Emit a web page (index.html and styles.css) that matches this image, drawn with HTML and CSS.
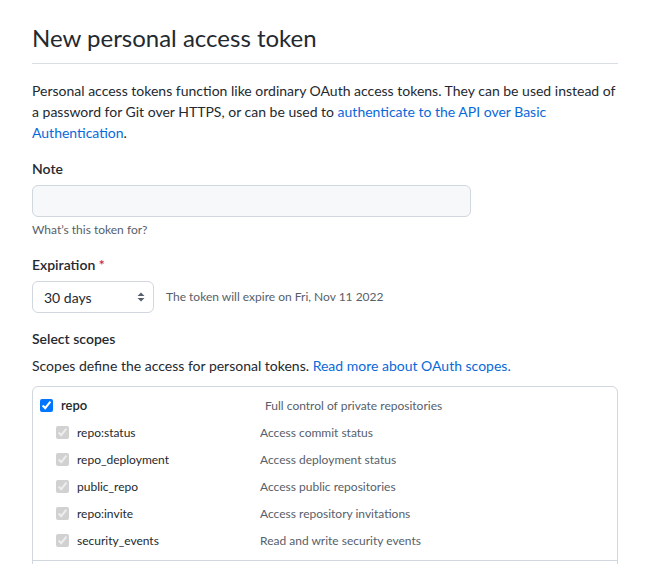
FILE: index.html
```html
<!DOCTYPE html>
<html lang="en">
<head>
  <meta charset="UTF-8" />
  <meta name="viewport" content="width=device-width, initial-scale=1.0"/>
  <title>New personal access token</title>
  <link rel="stylesheet" href="styles.css">
</head>
<body>
  <div class="page">
    <div class="subhead">
      <h2 class="subhead-heading">New personal access token</h2>
    </div>

    <p class="intro">
      Personal access tokens function like ordinary OAuth access tokens. They can be used instead of
      a password for Git over HTTPS, or can be used to <a href="#">authenticate to the API over Basic</a><br><a href="#">Authentication</a>.
    </p>

    <div class="form-group">
      <label class="form-label" for="note">Note</label>
      <input class="form-control note-input" type="text" id="note">
      <p class="note">What’s this token for?</p>
    </div>

    <div class="form-group">
      <label class="form-label" for="expiry">Expiration <span class="required">*</span></label>
      <div class="expiry-row">
        <div class="select-wrap">
          <select class="form-select" id="expiry">
            <option>30 days</option>
            <option>7 days</option>
            <option>60 days</option>
            <option>90 days</option>
          </select>
          <svg class="select-arrows" width="8" height="12" viewBox="0 0 8 12">
            <path d="M4 1.5 L7.5 5 H0.5 Z M4 10.5 L0.5 7 H7.5 Z" fill="#57606a"/>
          </svg>
        </div>
        <span class="expiry-note">The token will expire on Fri, Nov 11 2022</span>
      </div>
    </div>

    <div class="form-group">
      <div class="form-label">Select scopes</div>
      <p class="scopes-desc">Scopes define the access for personal tokens. <a href="#">Read more about OAuth scopes.</a></p>

      <div class="scopes">
        <div class="scope-group">
          <div class="scope-row parent">
            <label class="scope-name"><input type="checkbox" checked> repo</label>
            <span class="scope-desc">Full control of private repositories</span>
          </div>
          <div class="scope-row child">
            <label class="scope-name"><input type="checkbox" checked disabled> repo:status</label>
            <span class="scope-desc">Access commit status</span>
          </div>
          <div class="scope-row child">
            <label class="scope-name"><input type="checkbox" checked disabled> repo_deployment</label>
            <span class="scope-desc">Access deployment status</span>
          </div>
          <div class="scope-row child">
            <label class="scope-name"><input type="checkbox" checked disabled> public_repo</label>
            <span class="scope-desc">Access public repositories</span>
          </div>
          <div class="scope-row child">
            <label class="scope-name"><input type="checkbox" checked disabled> repo:invite</label>
            <span class="scope-desc">Access repository invitations</span>
          </div>
          <div class="scope-row child">
            <label class="scope-name"><input type="checkbox" checked disabled> security_events</label>
            <span class="scope-desc">Read and write security events</span>
          </div>
        </div>
        <div class="scope-group empty"></div>
      </div>
    </div>
  </div>
</body>
</html>
```

FILE: styles.css
```css
body {
  margin: 0;
  font-family: Lato, "Noto Sans", sans-serif;
  font-size: 14px;
  line-height: 1.5;
  color: #24292f;
  background: #fff;
}
a {
  color: #0969da;
  text-decoration: none;
}
.page {
  width: 586px;
  padding: 20px 0 0 32px;
}
.subhead {
  border-bottom: 1px solid #d8dee4;
  padding-bottom: 7px;
  margin-bottom: 16px;
}
.subhead-heading {
  margin: 0;
  font-size: 24px;
  font-weight: 400;
  line-height: 36px;
}
.intro {
  margin: 0;
}
.form-group {
  margin: 15px 0;
}
.form-label {
  display: block;
  font-weight: 600;
  margin-bottom: 6px;
}
.required {
  color: #cf222e;
}
.form-control {
  box-sizing: border-box;
  height: 32px;
  padding: 5px 12px;
  font: inherit;
  border: 1px solid #d0d7de;
  border-radius: 6px;
  background: #f6f8fa;
  outline: none;
}
.note-input {
  width: 439px;
  display: block;
}
.note {
  margin: 4px 0 0;
  font-size: 12px;
  color: #57606a;
}
.expiry-row {
  display: flex;
  align-items: center;
  gap: 12px;
}
.select-wrap {
  position: relative;
  width: 122px;
  height: 32px;
}
.form-select {
  appearance: none;
  box-sizing: border-box;
  width: 100%;
  height: 100%;
  padding: 0 24px 0 11px;
  font: inherit;
  color: #24292f;
  background: #fff;
  border: 1px solid #d0d7de;
  border-radius: 6px;
}
.select-arrows {
  position: absolute;
  right: 9px;
  top: 10px;
  pointer-events: none;
}
.expiry-note {
  font-size: 12px;
  color: #57606a;
}
.scopes-desc {
  margin: 0 0 10px;
}
.scopes {
  border: 1px solid #d0d7de;
  border-radius: 6px;
}
.scope-group {
  padding: 5px 0 6px;
  border-bottom: 1px solid #d0d7de;
}
.scope-group.empty {
  height: 24px;
  padding: 0;
}
.scope-row {
  display: flex;
  align-items: center;
  height: 27px;
  font-size: 12px;
}
.scope-name {
  display: flex;
  align-items: center;
  gap: 5px;
  box-sizing: border-box;
}
.parent .scope-name {
  width: 232px;
  padding-left: 4px;
  font-weight: 600;
  font-size: 13px;
}
.child .scope-name {
  width: 227px;
  padding-left: 20px;
}
.scope-name input {
  margin: 0 3px;
  width: 13px;
  height: 13px;
}
.scope-desc {
  color: #57606a;
}
```
